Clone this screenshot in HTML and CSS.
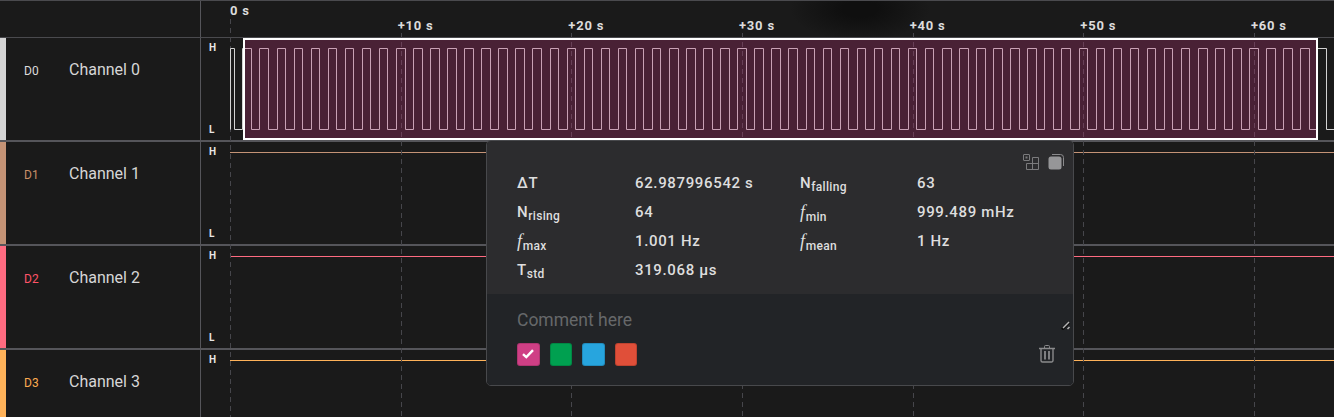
FILE: index.html
```html
<!DOCTYPE html>
<html lang="en">
<head>
    <meta charset="UTF-8">
    <title>Logic analyzer</title>
    <link rel="stylesheet" href="styles.css">
</head>
<body>

<div class="app">
    <div class="ruler">
        <div class="ruler-side"></div>
        <div class="ruler-scale">
            <div class="tick tick-zero"><span>0 s</span></div>
            <div class="tick"><span>+10 s</span></div>
            <div class="tick"><span>+20 s</span></div>
            <div class="tick"><span>+30 s</span></div>
            <div class="tick"><span>+40 s</span></div>
            <div class="tick"><span>+50 s</span></div>
            <div class="tick"><span>+60 s</span></div>
        </div>
    </div>

    <div class="channel ch0">
        <div class="channel-bar"></div>
        <div class="channel-name"><span class="channel-id">D0</span><span>Channel 0</span></div>
        <div class="trace">
            <div class="levels"><span>H</span><span>L</span></div>
            <svg class="wave" width="1133" height="102">
                <path id="wave0" d="" fill="none" stroke="#d2d2d2" stroke-width="1"/>
            </svg>
            <div class="selection"></div>
        </div>
    </div>

    <div class="channel ch1">
        <div class="channel-bar"></div>
        <div class="channel-name"><span class="channel-id">D1</span><span>Channel 1</span></div>
        <div class="trace">
            <div class="levels"><span>H</span><span>L</span></div>
            <div class="level-line"></div>
        </div>
    </div>

    <div class="channel ch2">
        <div class="channel-bar"></div>
        <div class="channel-name"><span class="channel-id">D2</span><span>Channel 2</span></div>
        <div class="trace">
            <div class="levels"><span>H</span><span>L</span></div>
            <div class="level-line"></div>
        </div>
    </div>

    <div class="channel ch3">
        <div class="channel-bar"></div>
        <div class="channel-name"><span class="channel-id">D3</span><span>Channel 3</span></div>
        <div class="trace">
            <div class="levels"><span>H</span></div>
            <div class="level-line"></div>
        </div>
    </div>

    <!-- Measurement popup -->
    <div class="popup">
        <div class="popup-stats">
            <div class="popup-actions">
                <svg width="16" height="16" viewBox="0 0 16 16" fill="none" stroke="#7b7b7d" stroke-width="1">
                    <rect x="0.5" y="0.5" width="6" height="6" rx="0.5"/>
                    <rect x="2.5" y="2.5" width="2" height="2" fill="#7b7b7d" stroke="none"/>
                    <path d="M9.5 3.5h6v12h-12v-6h12M9.5 3.500v12"/>
                </svg>
                <svg width="16" height="16" viewBox="0 0 16 16">
                    <path d="M4 0.5h8.500a3 3 0 0 1 3 3v8.500" fill="none" stroke="#8a8a8c" stroke-width="1"/>
                    <rect x="0.5" y="2.500" width="13" height="13" rx="2.500" fill="#969698"/>
                </svg>
            </div>
            <div class="stats-grid">
                <span>&Delta;T</span><span>62.987996542 s</span>
                <span>N<sub>falling</sub></span><span>63</span>
                <span>N<sub>rising</sub></span><span>64</span>
                <span><i>f</i><sub>min</sub></span><span>999.489 mHz</span>
                <span><i>f</i><sub>max</sub></span><span>1.001 Hz</span>
                <span><i>f</i><sub>mean</sub></span><span>1 Hz</span>
                <span>T<sub>std</sub></span><span>319.068 &micro;s</span>
            </div>
        </div>
        <div class="popup-comment">
            <div class="comment-text">Comment here</div>
            <svg class="resize-handle" width="10" height="10" viewBox="0 0 10 10">
                <path d="M1 9.500l7-7" stroke="#0c0c0c" stroke-width="2.800"/>
                <path d="M2 8l6-6M6.500 9l2-2" stroke="#b5b5b5" stroke-width="1.500"/>
            </svg>
            <div class="comment-footer">
                <div class="swatches">
                    <div class="swatch swatch-pink">
                        <svg width="12" height="10" viewBox="0 0 12 10"><path d="M1 5.200l3.300 3 6.700-7" fill="none" stroke="#fff" stroke-width="2.400"/></svg>
                    </div>
                    <div class="swatch swatch-green"></div>
                    <div class="swatch swatch-blue"></div>
                    <div class="swatch swatch-red"></div>
                </div>
                <svg class="trash" width="16" height="18" viewBox="0 0 16 18" fill="none" stroke="#8a8a8c">
                    <path d="M0 3.500h16" stroke-width="1.400"/>
                    <path d="M5.500 3v-1.500a1 1 0 0 1 1-1h3a1 1 0 0 1 1 1V3" stroke-width="1"/>
                    <path d="M2 4v11.500a1.500 1.500 0 0 0 1.500 1.500h9a1.500 1.500 0 0 0 1.500-1.500V4" stroke-width="1.400"/>
                    <path d="M6 6v8.500M10 6v8.500" stroke-width="1.800"/>
                </svg>
            </div>
        </div>
    </div>
</div>

<script src="script.js"></script>
</body>
</html>
```

FILE: styles.css
```css
html, body {
    margin: 0;
    padding: 0;
    height: 100%;
    overflow: hidden;
    background-color: #1a1a1a;
    font-family: Roboto, Arial, sans-serif;
}

.app {
    position: relative;
    width: 1334px;
    height: 417px;
    overflow: hidden;
    background-color: #1a1a1a;
}

/* Time ruler */
.ruler {
    display: flex;
    height: 36px;
    border-top: 1px solid #4a4a4e;
    border-bottom: 1px solid #4a4a4e;
    background-image: radial-gradient(ellipse 70px 32px at 860px 8px, #0f0f0f 0, #0f0f0f 25%, transparent 100%);
}

.ruler-side {
    width: 200px;
    border-right: 1px solid #55555a;
}

.ruler-scale {
    position: absolute;
    top: 1px;
    left: 230px;
    bottom: 0;
    display: flex;
}

.tick {
    position: relative;
    width: 170.67px;
    height: 416px;
    background-image: repeating-linear-gradient(#46464b 0, #46464b 5px, transparent 5px, transparent 9px);
    background-repeat: no-repeat;
    background-size: 1px 100%;
    background-position: 0 32px;
    z-index: 1;
}

.tick span {
    position: absolute;
    top: 17px;
    left: -3px;
    color: #dcdcdc;
    font-size: 13px;
    font-weight: 700;
    letter-spacing: 0.8px;
    white-space: nowrap;
}

.tick-zero {
    background-position: 0 18px;
}

.tick-zero span {
    top: 2px;
    left: 0;
}

/* Channel rows */
.channel {
    display: flex;
    height: 102px;
    border-bottom: 2px solid #55555a;
}

.channel-bar {
    width: 6px;
    background-color: var(--bar);
}

.channel-name {
    display: flex;
    align-items: baseline;
    box-sizing: border-box;
    width: 195px;
    padding: 22px 0 0 18px;
    border-right: 1px solid #55555a;
    color: #d6d6d6;
    font-size: 16px;
}

.channel-id {
    width: 45px;
    color: var(--label);
    font-size: 12px;
    letter-spacing: 0.2px;
}

.ch0 { --bar: #d4d4d4; --label: #dcdcdc; --line: #d4d4d4; }
.ch1 { --bar: #c49376; --label: #c98f68; --line: #c49376; }
.ch2 { --bar: #ff6b81; --label: #ff5468; --line: #ff6b81; }
.ch3 { --bar: #ffb259; --label: #fbab50; --line: #ffb259; }

.trace {
    position: relative;
    flex: 1;
}

.levels {
    display: flex;
    flex-direction: column;
    justify-content: space-between;
    box-sizing: border-box;
    height: 100%;
    padding: 4px 0 4px 8px;
    color: #e6e6e6;
    font-size: 10px;
    font-weight: 700;
    line-height: 12px;
}

.level-line {
    position: absolute;
    top: 10px;
    left: 29px;
    right: 0;
    height: 1px;
    background-color: var(--line);
}

.wave {
    position: absolute;
    top: 0;
    left: 0;
    z-index: 2;
}

.selection {
    position: absolute;
    top: 0;
    left: 42px;
    width: 1071px;
    height: 98px;
    border: 2px solid #ffffff;
    background-color: rgba(181, 52, 116, 0.31);
    z-index: 3;
}

/* Popup */
.popup {
    position: absolute;
    top: 140px;
    left: 486px;
    width: 586px;
    height: 244px;
    border: 1px solid #48494c;
    border-radius: 5px;
    overflow: hidden;
    z-index: 5;
}

.popup-stats {
    position: relative;
    height: 153px;
    background-color: #2c2c2e;
}

.popup-actions {
    position: absolute;
    top: 13px;
    right: 9px;
    display: flex;
    gap: 9px;
}

.stats-grid {
    display: grid;
    grid-template-columns: 118px 165px 117px 1fr;
    grid-auto-rows: 29px;
    padding: 28px 0 0 30px;
    color: #dedede;
    font-size: 15px;
    font-weight: 500;
    letter-spacing: 0.65px;
    line-height: 29px;
}

.stats-grid sub {
    font-size: 12px;
    line-height: 0;
    letter-spacing: 0.3px;
    vertical-align: -3px;
}

.stats-grid i {
    font-family: "Liberation Serif", serif;
    font-size: 18px;
}

.popup-comment {
    position: relative;
    height: 91px;
    padding: 0 30px;
    background-color: #222427;
}

.comment-text {
    padding-top: 16px;
    color: #66686a;
    font-size: 17.5px;
    line-height: 21px;
}

.resize-handle {
    position: absolute;
    top: 26px;
    right: 2px;
}

.comment-footer {
    display: flex;
    justify-content: space-between;
    align-items: center;
    margin-top: 12px;
    margin-right: -12px;
}

.swatches {
    display: flex;
    gap: 10px;
}

.swatch {
    display: flex;
    align-items: center;
    justify-content: center;
    box-sizing: border-box;
    width: 22.5px;
    height: 22.5px;
    border-radius: 3px;
    border: 1px solid rgba(0, 0, 0, 0.15);
}

.swatch-pink { background-color: #cf3f85; }
.swatch-green { background-color: #00a050; }
.swatch-blue { background-color: #27a5de; }
.swatch-red { background-color: #e04f39; }
```

FILE: script.js
```js
// Build the D0 square wave: 1 Hz = 17.06 px per period, edges snapped to pixels
const LEFT = 201;
const HIGH = 10.5;
const LOW = 91.5;
const HALF = 8.532;
const FIRST_EDGE = 242.9;

function snap(x) {
    return Math.floor(x) + 0.5 - LEFT;
}

let d = 'M' + snap(230) + ' ' + LOW + 'V' + HIGH + 'H' + snap(FIRST_EDGE - HALF) + 'V' + LOW;
let level = HIGH;
for (let k = 0; k < 128; k++) {
    d += 'H' + snap(FIRST_EDGE + k * HALF) + 'V' + level;
    level = level === HIGH ? LOW : HIGH;
}
d += 'H' + (1334 - LEFT);
document.getElementById('wave0').setAttribute('d', d);
```
